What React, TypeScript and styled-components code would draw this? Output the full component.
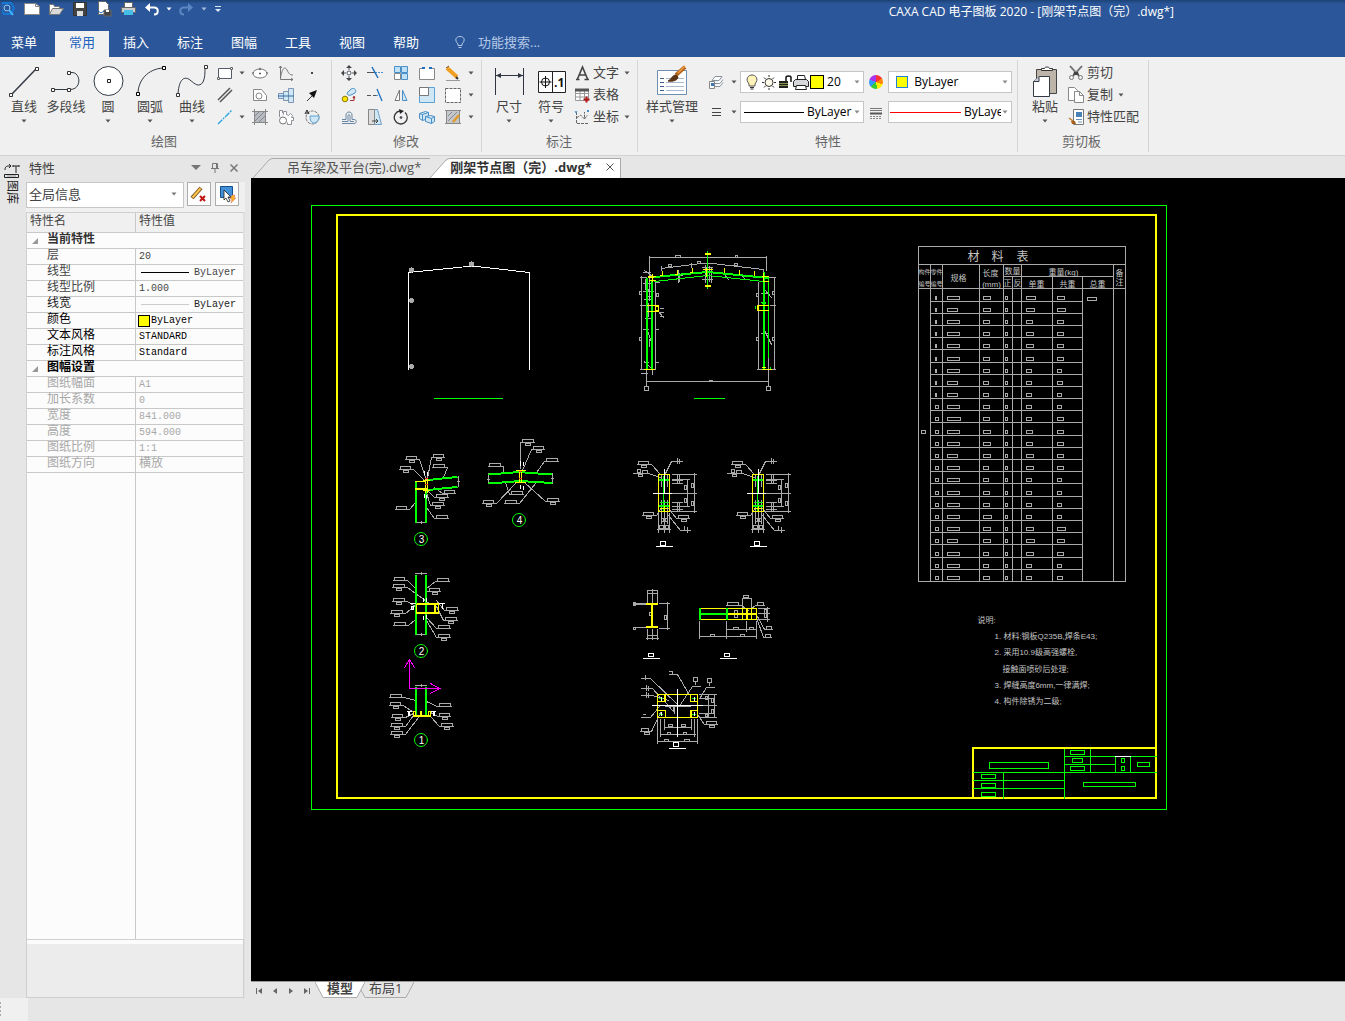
import React from "react";
import styled, { createGlobalStyle } from "styled-components";

const UI = '"Open Sans", "Noto Sans CJK SC", sans-serif';
const GRID = '"Liberation Mono", "Noto Sans CJK SC", monospace';

const GlobalStyle = createGlobalStyle`
  *, *::before, *::after { box-sizing: border-box; }
  body { margin: 0; background: #e6e6e6; }
  button, input, select { font: inherit; color: inherit; border: 0; padding: 0; margin: 0; background: none; outline: none; }
  select { appearance: none; min-width: 0; }
  svg { display: block; flex: none; }
`;

const App = styled.div`
  display: flex;
  flex-direction: column;
  height: 100vh;
  overflow: hidden;
  font-family: ${UI};
  font-size: 13px;
  line-height: 18px;
  color: #444;
`;

/* ---------- Title bar ---------- */

const TitleBar = styled.header`
  display: flex;
  align-items: flex-start;
  justify-content: space-between;
  height: 30px;
  padding-right: 171px;
  background: linear-gradient(#1d4376, #2b579a 4px);
  color: #fff;
`;

const QuickAccess = styled.div`
  display: flex;
  align-items: center;
  padding-top: 1px;
`;

const QuickButton = styled.button<{ $w?: number }>`
  display: flex;
  justify-content: center;
  align-items: center;
  width: ${(p) => p.$w ?? 24}px;
  height: 16px;
`;

const Title = styled.h1`
  margin: 0;
  padding-top: 3px;
  font-size: 12px;
  font-weight: 400;
  line-height: 18px;
  white-space: nowrap;
`;

/* ---------- Ribbon tabs ---------- */

const TabBar = styled.nav`
  display: flex;
  align-items: stretch;
  height: 27px;
  background: #2b579a;
  color: #fff;
`;

const RibbonTab = styled.button<{ $active?: boolean; $menu?: boolean }>`
  width: ${(p) => (p.$menu ? 48 : 54)}px;
  margin-right: ${(p) => (p.$menu ? 7 : 0)}px;
  margin-top: 1px;
  padding-bottom: 4px;
  background: ${(p) => (p.$active ? "#f0f0f0" : "transparent")};
  color: ${(p) => (p.$active ? "#1e63c0" : "#fff")};
`;

const SearchLabel = styled.label`
  display: flex;
  align-items: center;
  gap: 12px;
  margin-left: 21px;
  padding-bottom: 3px;
  color: #b4c8e6;
  input { width: 120px; }
  input::placeholder { color: #b4c8e6; opacity: 1; }
`;

/* ---------- Ribbon ---------- */

const Ribbon = styled.section`
  display: flex;
  height: 99px;
  padding: 3px 0;
  background: #f0f0f0;
  border-bottom: 1px solid #d2d2d2;
`;

const Group = styled.div<{ $left: number; $right: number }>`
  display: flex;
  flex-direction: column;
  padding: 2px ${(p) => p.$right}px 0 ${(p) => p.$left}px;
  border-right: 1px solid #d5d5d5;
`;

const GroupBody = styled.div`
  display: flex;
  height: 70px;
`;

const GroupName = styled.div`
  text-align: center;
  color: #666;
`;

const BigButton = styled.button<{ $w?: number }>`
  display: flex;
  flex-direction: column;
  align-items: center;
  width: ${(p) => p.$w ?? 42}px;
  padding-top: 3px;
  white-space: nowrap;
  > span { margin-bottom: 4px; }
`;

const IconGrid = styled.div<{ $cols: string }>`
  display: grid;
  grid-template-columns: ${(p) => p.$cols};
  grid-auto-rows: 22px;
`;

const IconButton = styled.button`
  display: flex;
  align-items: center;
  justify-content: center;
`;

const ListButton = styled.button`
  display: flex;
  align-items: center;
  gap: 3px;
  height: 22px;
  white-space: nowrap;
  > span { padding-bottom: 2px; }
  > span + svg { margin-left: 2px; }
`;

const List = styled.div`
  display: flex;
  flex-direction: column;
  padding-left: 2px;
`;

const ComboGrid = styled.div`
  display: grid;
  grid-template-columns: 35px 124px 24px 124px;
  grid-template-rows: 22px 22px;
  row-gap: 8px;
  padding-top: 9px;
  padding-left: 5px;
`;

const SplitIcon = styled.button`
  display: flex;
  align-items: center;
  justify-content: space-between;
  padding: 0 3px;
`;

const Combo = styled.label<{ $pad?: number }>`
  display: flex;
  align-items: center;
  gap: 1px;
  padding: 0 3px 0 ${(p) => p.$pad ?? 3}px;
  border: 1px solid #c6c6c6;
  background: #fff;
  color: #000;
  font-size: 12px;
  overflow: hidden;
  select { flex: 1; padding-left: 2px; }
`;

const Swatch = styled.span<{ $size: number; $edge: string }>`
  flex: none;
  width: ${(p) => p.$size}px;
  height: ${(p) => p.$size}px;
  border: 1px solid ${(p) => p.$edge};
  background: #ff0;
`;

const Stroke = styled.span<{ $w: number; $c: string }>`
  flex: none;
  width: ${(p) => p.$w}px;
  height: 1px;
  background: ${(p) => p.$c};
`;

const Wheel = styled.span`
  width: 14px;
  height: 14px;
  border-radius: 50%;
  background: conic-gradient(#f33 0 60deg, #f80 60deg 110deg, #fe0 110deg 170deg, #3c3 170deg 230deg, #39f 230deg 290deg, #a3e 290deg);
`;

/* ---------- Workspace ---------- */

const Workspace = styled.main`
  display: flex;
  flex: 1;
  min-height: 0;
`;

const SideStrip = styled.aside`
  width: 26px;
  padding: 7px 0 0 4px;
`;

const SideTab = styled.button`
  display: flex;
  flex-direction: column;
  align-items: center;
  gap: 1px;
  width: 16px;
  color: #222;
  span { writing-mode: vertical-rl; text-orientation: sideways; font-size: 12px; line-height: 16px; }
`;

const Panel = styled.section`
  display: flex;
  flex-direction: column;
  width: 219px;
  margin-right: 6px;
  background: #f0f0f0;
`;

const PanelHead = styled.div`
  display: flex;
  align-items: center;
  height: 26px;
  padding: 0 2px 3px 3px;
  background: #e6e6e6;
  h2 { flex: 1; margin: 0; font-size: 13px; font-weight: 400; }
`;

const HeadButton = styled.button`
  display: flex;
  justify-content: center;
  width: 19px;
`;

const Selector = styled.div`
  display: flex;
  gap: 3px;
  height: 30px;
`;

const ScopeCombo = styled(Combo)`
  flex: 1;
  height: 26px;
  padding-right: 6px;
  padding-bottom: 2px;
  font-size: 13px;
  color: #444;
  select { padding-left: 0; }
`;

const ToolButton = styled.button`
  display: flex;
  align-items: center;
  justify-content: center;
  width: 24px;
  height: 24px;
  border: 1px solid #adadad;
  background: #fdfdfd;
  & + & { margin: 0 6px 0 1px; }
`;

const Sheet = styled.div`
  display: flex;
  flex-direction: column;
  flex: 1;
  min-height: 0;
  border: 1px solid #d0d0d0;
  border-right: 2px solid #e0e0e0;
  background: #fcfcfc;
`;

const Props = styled.table`
  width: 100%;
  border-collapse: separate;
  border-spacing: 0;
  table-layout: fixed;
  font-family: ${GRID};
  font-size: 12px;
  line-height: 15px;
  col:first-child { width: 109px; }
  th, td { padding: 0; height: 16px; border-bottom: 1px solid #c8c8c8; text-align: left; font-weight: 400; white-space: nowrap; }
  thead th { height: 20px; padding-left: 3px; background: #f0f0f0; }
  tr > :first-child:not([colspan]) { border-right: 1px solid #c8c8c8; }
`;

const Row = styled.tr<{ $tone: string }>`
  color: ${(p) => p.$tone};
  th:not([colspan]) { padding-left: 20px; }
`;

const SectionToggle = styled.button`
  display: flex;
  align-items: center;
  gap: 9px;
  height: 15px;
  padding-left: 5px;
  font-weight: 700;
`;

const Value = styled.div<{ $latin?: boolean; $pad?: number; $gap?: number }>`
  display: flex;
  align-items: center;
  gap: ${(p) => p.$gap ?? 5}px;
  height: 15px;
  padding-left: ${(p) => p.$pad ?? 3}px;
  font-size: ${(p) => (p.$latin ? 10 : 12)}px;
`;

const Blank = styled.div`
  flex: 1;
  width: 109px;
  border-right: 1px solid #c8c8c8;
`;

const Hint = styled.div`
  height: 57px;
  border-top: 4px solid #fcfcfc;
  outline: 1px solid #cfcfcf;
  background: #ececec;
`;

/* ---------- Documents ---------- */

const Documents = styled.section`
  display: flex;
  flex-direction: column;
  flex: 1;
  min-width: 0;
`;

const DocTabs = styled.div`
  display: flex;
  align-items: flex-end;
  height: 22px;
  padding-left: 2px;
`;

const DocTab = styled.div<{ $active?: boolean }>`
  display: flex;
  height: 20px;
  font-weight: ${(p) => (p.$active ? 700 : 400)};
  color: ${(p) => (p.$active ? "#333" : "#555")};
`;

const DocTabBody = styled.div<{ $active?: boolean }>`
  display: flex;
  align-items: center;
  gap: 14px;
  padding: 0 ${(p) => (p.$active ? 6 : 9)}px 3px ${(p) => (p.$active ? 0 : 14)}px;
  border-top: 1px solid #aaa;
  border-right: ${(p) => (p.$active ? 1 : 0)}px solid #aaa;
  background: ${(p) => (p.$active ? "#fff" : "#e6e6e6")};
  white-space: nowrap;
`;

const Canvas = styled.div`
  flex: 1;
  min-height: 0;
  overflow: hidden;
  background: #000;
`;

const SheetTabs = styled.div`
  display: flex;
  height: 17px;
  border-top: 1px solid #999;
`;

const SheetNav = styled.div`
  display: flex;
  align-items: center;
  padding-top: 1px;
  width: 64px;
`;

const NavButton = styled.button`
  display: flex;
  justify-content: center;
  width: 16px;
`;

const SheetTab = styled.button<{ $active?: boolean }>`
  display: flex;
  height: 16px;
  padding: 0 4px;
  line-height: 12px;
  border-bottom: 1px solid #aaa;
  background: ${(p) => (p.$active ? "#fff" : "transparent")};
  font-weight: ${(p) => (p.$active ? 700 : 400)};
`;

const StatusBar = styled.footer`
  height: 23px;
  background: #e6e6e6;
`;

const Grip = styled.div`
  width: 28px;
  height: 23px;
  padding-top: 4px;
  background: #f0f0f0;
`;

/* ---------- Icons ---------- */

type IconProps = { children: React.ReactNode; s?: number; w?: number; c?: string };
const Icon = ({ children, s = 16, w, c = "#555b66" }: IconProps) => (
  <svg width={w ?? s} height={s} viewBox={`0 0 ${w ?? s} ${s}`} fill="none" stroke={c} aria-hidden="true">
    {children}
  </svg>
);

const Arrow = ({ c = "#555" }: { c?: string }) => (
  <svg width="6" height="4" viewBox="0 0 6 4" aria-hidden="true">
    <path d="M.5 .5h5L3 3.5z" fill={c} />
  </svg>
);

const Big: Record<string, React.ReactNode> = {
  line: <><path d="M4 29L28 4" strokeWidth="1.500" /><path d="M1.500 28.500h3v3h-3zM27.500 2.500h3v3h-3z" fill="#fff" stroke="#333" /></>,
  poly: <><path d="M3 24.500h16M18 7.500h4c9 0 10 17-2 17" /><path d="M1.500 23.500h3v3h-3zM17.500 23.500h3v3h-3zM17.500 6.500h3v3h-3z" fill="#fff" stroke="#333" /></>,
  circle: <><circle cx="16.500" cy="16" r="14.500" fill="#fff" /><path d="M15.500 14.500h3v3h-3z" stroke="#222" /></>,
  arc: <><path d="M4 29C4 15 14 4 29 3" /><path d="M2.500 27.500h3v3h-3zM28.500 1.500h3v3h-3z" fill="#fff" stroke="#000" /></>,
  curve: <><path d="M2 29C3 13 9 11 14 15s9 8 13 2c2-4 2-9 2-14" /><path d="M.5 28.500h3v3h-3zM28.500.5h3v3h-3z" fill="#fff" stroke="#333" /></>,
  dim: <><path d="M2.500 3v27M30.500 3v27M3 10.500h27" stroke="#2f3440" /><path d="M3 10.500l5-2.500v5zM30 10.500l-5-2.500v5z" fill="#2f3440" stroke="none" /></>,
  symbol: <><path d="M3.500 6.500h27v21h-27zM17.500 6.500v21" fill="#fff" stroke="#222" /><circle cx="10.500" cy="17" r="4" stroke="#111" /><path d="M4.500 17h12M10.500 11v12" stroke="#111" /><text x="19" y="22" fontSize="12" fontWeight="700" fontFamily="Open Sans" fill="#111" stroke="none">.1</text></>,
  style: <><path d="M1.500 5.500h29v24h-29z" fill="#fff" stroke="#6f8fae" /><path d="M4 13.500h4M4 17.500h4M4 21.500h4M4 25.500h4" stroke="#3f5f86" /><path d="M10 13.500h18M10 17.500h18M10 21.500h18M10 25.500h18" stroke="#a9b8cf" /><path d="M29 2l-9 8" stroke="#b4651d" strokeWidth="4" /><path d="M29 1l-7 7" stroke="#f0a040" strokeWidth="1.500" /><path d="M12 16c3-1 4-6 8-6l2 2c0 3-5 5-10 4z" fill="#5b3413" stroke="#5b3413" /></>,
  paste: <><path d="M7.500 4.500h20v24h-20z" fill="#bdb5aa" stroke="#444" /><path d="M12.500 5.500v-2h3c0-2 5-2 5 0h3v2z" fill="#fff" stroke="#333" /><path d="M4.500 16.500l6-5h10v20h-16z" fill="#fff" stroke="#333a44" /><path d="M4.500 16.500h5.500v-5" fill="#c9ccd6" /></>,
};

const B = "#4b8fc8";
const LB = "#cfe6f5";
const S: Record<string, React.ReactNode> = {
  rect: <><path d="M1.500 3.500h13v10h-13z" fill="#fff" /><path d="M.5 12.500h2v2h-2zM13.500 2.500h2v2h-2z" fill="#fff" stroke="#666" /></>,
  ellipse: <><ellipse cx="8" cy="8.500" rx="7" ry="4.500" fill="#fff" stroke="#777" /><circle cx="8" cy="4" r="1.200" fill="#777" stroke="none" /><path d="M8 7.500v2M7 8.500h2M0 8h2M14 8h2" /></>,
  func: <path d="M2.500 1v13.500H15M2.500 13C4 3 7 1 9 5s3 5 6 5M1 3l1.500-2L4 3M13 13l2 1.500L13 16" stroke="#777" />,
  dot: <rect x="7" y="7" width="2" height="2" fill="#444" stroke="none" />,
  parallel: <path d="M1 13L13 1M3 15L15 3" stroke="#555" strokeWidth="1.500" />,
  contour: <><path d="M1.500 2.500h8l5 6v5h-13z" fill="#fff" stroke="#888" /><circle cx="7" cy="9" r="3" stroke="#888" /></>,
  shaft: <><path d="M.5 6.500h5v5h-5zM5.500 4.500h5v9h-5zM10.500 1.500h5v14h-5z" fill={LB} stroke="#7b95b2" /><path d="M0 9h16" stroke="#2e6da4" /></>,
  arrow: <><path d="M3 14l6-6" stroke="#333" /><path d="M13 3l-3 8-5-5z" fill="#111" stroke="none" /></>,
  axis: <path d="M1 15L15 1" stroke="#27a3e0" strokeWidth="1.300" strokeDasharray="6 1 2 1" />,
  hatch: <><path d="M2.500 2.500h11v11h-11z" fill="#b8bcc2" /><path d="M0 2.500h16M0 13.500h16M2.500 0v16M13.500 0v16M3 7l4-4M3 12l9-9M7 13l6-6" stroke="#888" /></>,
  gear: <><path d="M5.500 5.500V2.500h3v3l2 1 2-2 2 2-1 2h2v3h-2v4h-4v-2" fill="#fff" stroke="#8a8f98" /><path d="M1.500 8V1.500h3V4" fill="#fff" stroke="#8a8f98" /><circle cx="5" cy="11.500" r="3.500" fill="#fff" stroke="#777" /></>,
  section: <><circle cx="8.500" cy="8.500" r="6.500" strokeDasharray="3 1" stroke="#777" /><path d="M6 7h9c0 4-2 7-5 7s-4-3-4-7z" fill={LB} stroke="#5aa2d6" /><path d="M1 5l2-4 2 4M2 4h3" stroke="#222" /></>,
  move: <><circle cx="8" cy="8" r="2" fill="#fff" /><path d="M8 0l3 3H5zM8 16l3-3H5zM0 8l3-3v6zM16 8l-3-3v6z" fill="#444" stroke="none" /><path d="M8 3v2M8 11v2M3 8h2M11 8h2" /></>,
  trim: <><path d="M0 7.500h8" stroke="#555" /><path d="M8 7.500h8" stroke={B} strokeDasharray="2 1" /><path d="M5 2l6 11" stroke="#1f6fc0" strokeWidth="1.500" /></>,
  array: <><path d="M1.500 1.500h6v6h-6zM8.500 1.500h6v6h-6zM8.500 8.500h6v6h-6z" fill="#bfe0f5" stroke={B} /><path d="M1.500 8.500h6v6h-6z" fill="#fff" stroke="#888" /></>,
  open: <><path d="M5 3.500H.5v11h15v-11H12" fill="#fff" stroke="#888" /><path d="M3 3h3M10 3h3" stroke="#1f6fc0" strokeWidth="2" /></>,
  erase: <><path d="M2 3l10 9" stroke="#f0a020" strokeWidth="4" /><path d="M1 3l3-2" stroke="#7a4a12" /><path d="M11 12l2 2" stroke="#333" strokeWidth="2" /><path d="M1 15.500h14" stroke="#999" /></>,
  copy: <><circle cx="4" cy="12" r="2.800" fill="#ffe600" stroke="#8a7a10" /><path d="M6 6l4-4c4-2 6 2 4 4l-4 2c-3 1-4-1-4-2z" fill={LB} stroke={B} /><path d="M9 13.500h4V10M13 9l-1 2h2z" stroke="#a33" /></>,
  extend: <><path d="M0 8.500h4M6 8.500h3" stroke="#555" /><path d="M9 8.500h4" stroke={B} strokeDasharray="2 1" /><path d="M10 2l5 12" stroke="#1f6fc0" strokeWidth="1.300" /></>,
  mirror: <><path d="M6.500 3v10.500H2z" fill="#fff" stroke="#777" /><path d="M9.500 3v10.500h4.500z" fill={LB} stroke={B} /></>,
  scale: <><path d="M.5.5h15v15H.5z" fill={LB} stroke="#5aa2d6" /><path d="M.5.5h9v8h-9z" fill="#fff" stroke="#777" /></>,
  select: <path d="M.5 1.500h15v14H.5z" fill="#fff" stroke="#666" strokeDasharray="3 1" />,
  offset: <path d="M1 14.500h12c3 0 3-4 0-4h-2V6c0-4-6-4-6 0v4.500H1M1 12.500h6V7c0-2 2-2 2 0v5.500h4" stroke="#6a86a6" />,
  stretch: <><path d="M1.500.5h9l4 15h-13z" fill={LB} stroke="#6f9fc8" /><path d="M1.500.5h6v15h-6z" fill="#ddd" stroke="#888" /><path d="M5 12h6M9 10l2 2-2 2" stroke="#444" /></>,
  rotate: <><path d="M12 3.500A6.500 6.500 0 1 1 7 2" stroke="#333" strokeWidth="1.300" /><path d="M6 0l5 2-4 3z" fill="#222" stroke="none" /><circle cx="8" cy="8.500" r="1" fill="#333" /></>,
  block: <><path d="M.5 4.500l6-2 3 1v6l-6 2-3-2z" fill={LB} stroke={B} /><path d="M.5 4.500l3 1 6-2M3.500 5.500v6" stroke={B} /><path d="M6.500 7.500l5-1 4 1v5l-3 2-6-2z" fill={LB} stroke={B} /><path d="M6.500 7.500l6 2 3-2M12.500 9.500v5" stroke={B} /></>,
  fillEdit: <><path d="M1.500 1.500h13v13h-13z" fill="#c4c7cc" stroke="#888" /><path d="M0 1.500h16M0 14.500h16M3 7l4-4M3 12l9-9" stroke="#888" /><path d="M8 13l6-7" stroke="#e09a2a" strokeWidth="2.500" /></>,
  text: <path d="M2 14.500h3.500M10.500 14.500H15M3.500 14L8.500 2l5 12M5.500 10h6" stroke="#444" strokeWidth="1.600" />,
  table: <><path d="M1.500 2.500h13v11h-13zM1.500 6.500h13M1.500 10h13M6 3v10M10.500 3v10" fill="#fff" stroke="#999" /><path d="M1 3h14" stroke="#555" strokeWidth="3" /><path d="M12.500 9.500v6M9.500 12.500h6" stroke="#b01818" strokeWidth="2" /></>,
  coord: <><path d="M2.500 3v11.500H15M2.500 9l4-3 4 4V3M10.500 10l3-4" stroke="#666" strokeDasharray="3 1" /><path d="M1 2l1 2 1-2M13 1l2 2M15 1l-2 2" stroke={B} /></>,
  layers: <><path d="M4 6.500l3-4h7l-3 4zM6 9.500h6l3-4M6 12.500h6l3-4" fill="#fff" stroke="#8a93a0" /><path d="M1.500 7.500h5v7h-5z" fill="#fff" stroke="#888" /><path d="M3 9h3v3H3z" fill="#3a75b5" stroke="none" /></>,
  lines: <path d="M4 4.500h9M4 8.500h9M4 11.500h9" stroke="#444" />,
  weights: <><path d="M2 4.500h12M2 6.500h12" stroke="#777" /><path d="M2 9.500h12" stroke="#555" strokeWidth="2" /><path d="M2 12.500h12M2 14.500h12" stroke="#888" strokeDasharray="2 1" /></>,
  bulb: <><path d="M5 10C1 5 4 1 8 1s7 4 3 9v2H5z" fill="#fff3b8" stroke="#555" /><path d="M6 13.500h4M6.500 15h3" stroke="#333" /></>,
  sun: <><circle cx="8" cy="8.500" r="4" fill="#fffbe8" stroke="#333" /><path d="M8 1v2M8 14v2M1 8.500h2M13 8.500h2M3 3.500l1.500 1.500M13 3.500L11.500 5M3 13.500L4.500 12M13 13.500L11.500 12" stroke="#333" /></>,
  lock: <><path d="M1 7h9v7H1z" fill="#222" stroke="none" /><path d="M1 9.500h9M1 11.500h9" stroke="#cfe06a" strokeWidth=".6" /><path d="M8 7V3.500C8 1.500 13 1.500 13 3.500V8" stroke="#111" strokeWidth="1.500" /></>,
  plot: <><path d="M4.500 5.500v-4h7l1 4" fill="#fff" stroke="#222" /><path d="M2.500 5.500h11l2 2v5h-15v-5z" fill="#d4d6da" stroke="#222" /><path d="M3.500 11.500h9l1 4h-11z" fill="#fff" stroke="#222" /></>,
  cut: <><path d="M2 1l9 10M14 1L5 11" stroke="#999" strokeWidth="2" /><path d="M2 1l9 10M14 1L5 11" stroke="#444" strokeWidth=".7" /><path d="M6 7h4l1 3H5z" fill="#444" stroke="none" /><circle cx="3.500" cy="12.500" r="2" stroke="#777" /><circle cx="12.500" cy="12.500" r="2" stroke="#777" /></>,
  dup: <><path d="M.5.5h6l3 3v10h-9z" fill="#fff" stroke="#888" /><path d="M6.500 4.500h5l4 4v7h-9z" fill="#fff" stroke="#888" /><path d="M11.500 4.500v4h4" stroke="#888" /></>,
  match: <><path d="M5.500.5h10v15h-10z" fill="#fff" stroke="#777" /><path d="M8 3h6v5H8z" fill="#4a82b8" stroke="none" /><path d="M8 10.500h6M10 13h4" stroke="#6a8fb8" /><path d="M1 9l4 3" stroke="#c87a2a" strokeWidth="1.500" /><path d="M3 12h4l1 3H4z" fill="#a9601c" stroke="none" /></>,
};

const Small = ({ n }: { n: string }) => <Icon>{S[n]}</Icon>;

/* ---------- CAD drawing ---------- */

const hl = (x1: number, x2: number, y: number) => `M${x1} ${y}H${x2}`;
const vl = (x: number, y1: number, y2: number) => `M${x} ${y1}V${y2}`;
const bx = (x: number, y: number, w: number, h: number) => `M${x} ${y}h${w}v${h}h${-w}z`;

type Tag = [x: number, y: number, w: number, sub: 0 | 1, side: "L" | "R", tx: number, ty: number];
const tagPath = ([x, y, w, sub, side, tx, ty]: Tag) => {
  const a = side === "L" ? x - 2 : x - 1;
  const b = side === "L" ? x + w + 1 : x + w + 3;
  const from = side === "L" ? a : b;
  return bx(x, y, w, 3) + hl(a, b, y + 3) + (sub ? bx(x + 3, y + 4, 5, 2) : "") + `M${from} ${y + 3}L${tx} ${ty}`;
};

const TAGS: Tag[] = [
  [406, 456, 10, 1, "R", 426, 480], [400, 466, 10, 1, "R", 424, 480], [433, 454, 10, 1, "L", 427, 478],
  [433, 464, 11, 0, "R", 443, 477], [444, 490, 10, 0, "L", 434, 487], [436, 494, 11, 1, "L", 427, 490],
  [432, 502, 11, 1, "L", 426, 492], [436, 515, 11, 0, "L", 426, 507], [396, 506, 10, 0, "R", 415, 502],
  [522, 439, 11, 1, "L", 520, 468], [533, 446, 10, 1, "L", 522, 470], [546, 458, 11, 0, "L", 536, 472],
  [489, 463, 11, 0, "R", 503, 471], [511, 491, 11, 0, "L", 505, 482], [483, 500, 10, 1, "R", 516, 482],
  [505, 500, 11, 0, "R", 535, 483], [547, 498, 11, 1, "L", 524, 482],
  [394, 577, 10, 0, "R", 415, 588], [393, 584, 11, 1, "R", 430, 604], [393, 598, 11, 1, "R", 415, 606],
  [391, 610, 11, 1, "R", 415, 605], [394, 622, 11, 0, "R", 415, 619], [437, 578, 11, 0, "L", 426, 588],
  [429, 588, 10, 1, "L", 426, 590], [446, 607, 11, 1, "L", 436, 600], [445, 617, 11, 1, "L", 436, 606],
  [438, 625, 11, 0, "L", 426, 617], [438, 634, 11, 1, "L", 426, 620],
  [390, 694, 11, 0, "R", 415, 700], [390, 702, 10, 1, "R", 413, 712], [392, 714, 10, 1, "R", 413, 713],
  [391, 723, 11, 1, "R", 413, 715], [391, 731, 11, 1, "R", 418, 717], [439, 703, 11, 0, "L", 426, 701],
  [439, 713, 10, 1, "L", 430, 712], [441, 723, 11, 1, "L", 430, 716],
  [727, 602, 11, 0, "R", 748, 610], [757, 602, 6, 0, "L", 751, 608], [766, 626, 5, 0, "L", 757, 616],
  [765, 634, 5, 0, "L", 756, 617], [706, 721, 10, 1, "L", 697, 714], [641, 728, 7, 1, "R", 660, 712],
];

const NODES: [number, number, string][] = [[421, 539, "3"], [519, 520, "4"], [421, 651, "2"], [421, 740, "1"]];

const Elevation = () => (
  <>
    <path stroke="#fff" d="M408 369V272L467 266H476L529 272V369" />
    <g fill="#aaa" stroke="none">
      <circle cx="411" cy="269.500" r="2.600" /><circle cx="411" cy="300" r="2.600" />
      <circle cx="411" cy="366" r="2.600" /><circle cx="471" cy="263.500" r="2.600" />
    </g>
    <path stroke="#0f0" d={hl(434, 502, 398) + hl(694, 724, 398)} />
  </>
);

const Frame = () => (
  <>
    <path
      stroke="#aaa"
      d={
        hl(649, 766, 257) + vl(649, 256, 272) + vl(766, 256, 270) + bx(675, 255, 5, 2) + bx(735, 255, 2, 2) +
        "M661 268L700 263H712L763 269V276M661 266V270M691 263V267" + bx(668, 264, 3, 2) + bx(697, 261, 3, 2) + bx(734, 263, 3, 2) +
        vl(641, 276, 369) + vl(655, 282, 369) + vl(758, 282, 369) + vl(774, 277, 369) +
        hl(640, 646, 277) + hl(640, 646, 305) + hl(640, 655, 369) + hl(655, 659, 282) + hl(768, 775, 277) + hl(770, 775, 305) + hl(757, 775, 369) +
        bx(639, 291, 2, 3) + bx(639, 337, 2, 3) + bx(656, 293, 2, 3) + bx(756, 293, 2, 3) + bx(756, 337, 2, 3) + bx(772, 291, 2, 3) + bx(772, 337, 2, 3) +
        vl(649, 270, 300) + "M644 270L652 276M643 272H650M646 286L649 292M646 296H652M646 328L652 344M643 329H648M649 339V346M644 361L650 367M641 373H647M652 370V374M644 362H648" +
        "M643 291H653M644 299H650M648 303V316M645 318H650M643 283H651M645 279V289" +
        hl(660, 663, 308) + hl(660, 663, 312) + hl(660, 663, 316) + "M657 310L663 317M764 289L771 297M764 330L771 344M655 329H658M655 362H658" +
        "M678 270V282M676 275H682M679 273V281M702 267H712M700 272H714M702 279H712M705 265V282M711 267V282M709 266V281M724 274L728 279M740 274L745 279M761 293H768M761 333H768" +
        hl(647, 768, 381) + hl(709, 712, 380) + vl(646, 357, 385) + vl(768, 357, 385)
      }
    />
    <g stroke="#aaa"><circle cx="646" cy="388" r="2.300" /><circle cx="768" cy="388" r="2.300" /></g>
    <path stroke="#0f0" strokeWidth="2" d="M646.500 278V368M651.500 281V368M763.500 272V368" />
    <path stroke="#0f0" d="M768 277V357M654 276L707 271L767 277M654 281L707 275L763 281M707 251V288M654 277L707 272L767 278M755 306V308M761 302H765M762 303H765M770 367V369" />
    <path
      stroke="#ff0"
      d={
        hl(705, 710, 253) + hl(705, 710, 254) + hl(705, 710, 285) + hl(705, 710, 286) +
        "M662 271V275H660M677 270V274H675M692 268V272H690M724 268V272M739 270V274M754 271V275M703 269H712M706 268V276" +
        hl(648, 655, 276) + hl(648, 653, 277) + hl(649, 655, 280) + vl(652, 274, 281) + hl(762, 768, 276) + hl(763, 768, 281) + vl(763, 273, 281) +
        bx(655, 306, 3, 4) + hl(647, 658, 305) + hl(647, 658, 311) + hl(757, 768, 305) + hl(757, 768, 310) + vl(757, 305, 310) + vl(758, 305, 310) +
        hl(644, 654, 369) + hl(762, 771, 369) + hl(762, 765, 367)
      }
    />
  </>
);

const Joints = () => (
  <>
    <path stroke="#aaa" d={TAGS.map(tagPath).join("")} />
    <path
      stroke="#aaa"
      d={hl(415, 426, 522) + vl(421, 521, 523) + hl(415, 426, 573) + vl(421, 572, 574) + hl(415, 426, 634) + vl(421, 633, 635) +
        hl(415, 426, 685) + vl(421, 684, 686) + vl(458, 476, 486) + hl(457, 459, 481) + vl(488, 473, 483) + hl(487, 489, 479) + vl(552, 473, 483) + hl(551, 553, 478)}
    />
    <path
      stroke="#0f0" strokeWidth="2"
      d="M415.500 482V521M425.500 490V521M428 479.500L456 476.500M428 489.500L456 486.500M489 474L518 471.500L551 474M489 483L520 480.500L551 482.500M415.500 575V633M425.500 575V633M415.500 687V714M425.500 687V714"
    />
    <path
      stroke="#ff0"
      d={hl(415, 425, 481) + hl(415, 426, 488) + hl(415, 426, 489) + vl(425, 479, 492) + vl(427, 479, 492) + hl(423, 429, 480) + hl(423, 429, 490) +
        vl(519, 470, 482) + vl(521, 470, 482) + hl(516, 525, 470) + hl(515, 525, 482) +
        bx(416, 604, 22, 9) + hl(417, 438, 603) + hl(417, 438, 612) + vl(434, 603, 613) + vl(435, 603, 613) +
        hl(414, 430, 716) + hl(414, 430, 715) + bx(413, 711, 2, 5) + bx(428, 711, 2, 5) + vl(420, 711, 715) + vl(421, 711, 715)}
    />
    <path stroke="#f22" d={hl(425, 427, 478) + hl(425, 427, 484) + hl(519, 521, 471) + hl(519, 521, 478)} />
    <path
      stroke="#fff"
      d={vl(424, 471, 474) + vl(427, 472, 475) + vl(424, 494, 497) + vl(426, 495, 498) + vl(520, 461, 465) + vl(523, 462, 465) + vl(520, 485, 488) + vl(523, 486, 489) +
        vl(423, 598, 601) + vl(426, 598, 601) + vl(423, 616, 619) + vl(426, 615, 618) + hl(410, 415, 603) + bx(411, 606, 2, 3) + hl(439, 444, 603) + vl(442, 604, 608) +
        hl(407, 411, 711) + vl(409, 711, 715) + vl(408, 711, 715) + hl(431, 435, 711) + vl(433, 711, 715) + vl(434, 711, 715)}
    />
    <path stroke="#f0f" d="M409 660V688H439M404 667L409 659L414 667M430 683L439 688L430 693" />
    {NODES.map(([x, y, n]) => (
      <g key={n} shapeRendering="auto">
        <circle cx={x - 0.5} cy={y - 0.5} r="6.500" stroke="#0f0" />
        <text x={x} y={y + 3} fill="#fff" stroke="none" fontSize="10" textAnchor="middle">{n}</text>
      </g>
    ))}
  </>
);

const EndPlate = ({ dx }: { dx: number }) => (
  <g transform={`translate(${dx} 0)`}>
    <path
      stroke="#aaa"
      d={
        tagPath([638, 461, 10, 1, "R", 660, 474]) + tagPath([643, 512, 10, 1, "R", 660, 509]) + tagPath([678, 515, 10, 1, "L", 668, 508]) +
        hl(633, 648, 473) + bx(637, 469, 3, 3) + bx(642, 470, 5, 3) + bx(638, 474, 4, 2) + "M648 473L660 477M664 475L671 461H682M677 458V463M679 459V463" +
        "M668 515L680 530H690M684 526V530M687 527V532" +
        hl(672, 696, 474) + hl(672, 696, 493) + hl(672, 696, 511) + vl(687, 479, 506) + vl(694, 473, 512) +
        hl(672, 689, 479) + hl(672, 682, 480) + hl(672, 682, 483) + hl(672, 682, 502) + hl(672, 689, 506) + hl(672, 682, 509) +
        bx(677, 474, 2, 9) + bx(677, 502, 2, 9) + bx(684, 485, 2, 4) + bx(691, 483, 2, 4) + bx(684, 498, 2, 4) + bx(691, 501, 2, 4) +
        vl(658, 513, 532) + vl(664, 500, 532) + vl(669, 513, 532) + vl(661, 500, 523) + vl(667, 500, 523) + hl(658, 669, 525) + hl(657, 670, 529) +
        bx(659, 525, 4, 3) + bx(665, 525, 3, 3) + bx(661, 518, 2, 3) + bx(665, 518, 2, 3) + vl(661, 475, 486) + vl(667, 475, 486)
      }
    />
    <path stroke="#0f0" d={vl(663, 476, 510) + hl(659, 669, 480) + hl(659, 669, 479) + hl(659, 669, 505) + hl(659, 669, 506) + hl(660, 668, 502)} />
    <path stroke="#ff0" d={bx(658, 474, 11, 37) + vl(664, 506, 511) + hl(660, 667, 508)} />
    <path stroke="#fff" d={hl(653, 671, 493) + vl(664, 469, 492) + bx(660, 541, 5, 4) + hl(656, 672, 546)} />
  </g>
);

const Sections = () => (
  <>
    <EndPlate dx={0} />
    <EndPlate dx={94} />
    <path
      stroke="#aaa"
      d={
        bx(647, 590, 10, 3) + vl(647, 590, 602) + vl(652, 589, 602) + vl(657, 590, 602) +
        vl(647, 629, 639) + vl(652, 629, 639) + vl(657, 629, 639) + bx(647, 635, 10, 3) + hl(646, 658, 638) +
        hl(659, 669, 603) + hl(659, 669, 628) + vl(667, 602, 629) + bx(664, 615, 2, 4) + hl(634, 645, 604) + hl(634, 645, 603) + hl(634, 645, 627) + bx(633, 602, 2, 3) + bx(633, 627, 2, 2) + bx(649, 612, 3, 3) +
        vl(699, 621, 638) + vl(726, 621, 638) + vl(756, 621, 638) + hl(726, 756, 629) + hl(699, 756, 636) + vl(746, 621, 631) +
        bx(733, 627, 5, 2) + bx(749, 627, 4, 2) + bx(710, 634, 4, 2) + bx(740, 634, 4, 2) + bx(743, 595, 5, 2) + hl(742, 751, 598) + vl(742, 598, 608) + vl(751, 598, 608) +
        vl(767, 607, 621) + hl(758, 769, 608) + hl(758, 769, 613) + hl(758, 769, 619) + bx(764, 609, 2, 8) + bx(734, 610, 3, 7) +
        "M641 678H650L677 704M645 675V679M669 674H677L688 693M669 671H672V674M641 688H652L660 697M646 685V690M648 686V690M641 695H652L668 700M646 692V697M648 693V697" +
        "M641 717H650L659 706M643 714H645M680 704L692 686H700M700 697L706 687H714M693 677H697V681H693ZM695 681V684M707 678H711V682H707ZM709 682V685" +
        vl(657, 719, 743) + vl(697, 719, 743) + vl(660, 719, 736) + vl(694, 719, 736) + vl(664, 719, 729) + vl(691, 719, 729) +
        hl(664, 691, 727) + hl(660, 695, 734) + hl(657, 697, 741) + bx(668, 724, 4, 2) + bx(681, 724, 4, 2) + bx(667, 732, 3, 2) + bx(683, 732, 3, 2) + bx(664, 739, 4, 2) + bx(684, 739, 5, 2) +
        hl(699, 716, 694) + hl(699, 716, 705) + hl(699, 716, 717) + vl(708, 694, 717) + vl(714, 694, 717) + hl(699, 710, 698) + hl(699, 710, 713) +
        bx(711, 698, 2, 4) + bx(711, 709, 2, 4) + bx(705, 696, 2, 3) + bx(705, 714, 2, 2) + "M665 702L673 711V707M674 706V713" + hl(665, 690, 706)
      }
    />
    <path
      stroke="#ff0"
      d={hl(646, 657, 603) + hl(646, 657, 604) + hl(646, 657, 626) + hl(646, 657, 627) + vl(651, 604, 627) + vl(652, 604, 627) +
        bx(700, 608, 56, 11) + hl(727, 756, 614) + hl(727, 756, 613) + vl(742, 608, 619) + vl(746, 608, 619) + vl(747, 608, 619) + vl(751, 608, 619) +
        bx(657, 694, 40, 23) + vl(665, 694, 701) + vl(665, 710, 717) + hl(657, 665, 701) + hl(657, 665, 710) +
        vl(690, 694, 701) + vl(690, 710, 717) + hl(690, 697, 701) + hl(690, 697, 710) + vl(664, 694, 701) + vl(691, 710, 717)}
    />
    <path stroke="#0f0" d={bx(699, 608, 1, 11) + bx(726, 608, 1, 11) + hl(700, 726, 613) + hl(700, 726, 614) + hl(659, 662, 698) + hl(659, 662, 714) + hl(692, 695, 698) + hl(692, 695, 714)} />
    <path
      stroke="#fff"
      d={bx(648, 653, 5, 3) + hl(643, 659, 658) + bx(724, 653, 5, 3) + hl(720, 736, 658) + bx(673, 742, 5, 4) + hl(669, 685, 748) +
        hl(652, 702, 705) + vl(677, 689, 736) + vl(661, 697, 700) + vl(661, 712, 715) + vl(694, 697, 700) + vl(694, 712, 715)}
    />
  </>
);

const RULES = [301, 313, 325, 337, 349, 362, 374, 386, 398, 410, 422, 435, 447, 459, 471, 483, 496, 508, 520, 532, 544, 557, 569, 581];
const CELLS: [number, number[]][] = [
  [947, [12, 10, 12, 12, 12, 12, 12, 10, 10, 12, 13, 12, 12, 10, 12, 12, 12, 12, 12, 12, 10, 12, 12, 12]],
  [983, [7, 7, 6, 6, 6, 6, 6, 5, 5, 6, 6, 7, 7, 7, 5, 5, 6, 6, 8, 7, 7, 5, 5, 6]],
  [1026, [9, 8, 6, 7, 7, 7, 5, 5, 5, 5, 5, 6, 6, 7, 7, 5, 5, 5, 5, 7, 8, 7, 5, 5]],
  [1057, [7, 8, 6, 6, 6, 6, 4, 5, 4, 4, 6, 6, 6, 6, 6, 4, 4, 4, 4, 8, 7, 6, 4, 5]],
];

const HEADINGS: [number, number, string, number][] = [
  [973, 260, "材", 12], [997, 260, "料", 12], [1022, 260, "表", 12],
  [924, 273, "构件", 6], [924, 285, "编号", 6], [936, 273, "零件", 6], [936, 285, "编号", 6],
  [958, 280, "规格", 8], [990, 275, "长度", 8], [991, 286, "(mm)", 8], [1012, 273, "数量", 8],
  [1007, 285, "正", 8], [1017, 285, "反", 8], [1063, 274, "重量(kg)", 8],
  [1036, 286, "单重", 8], [1067, 286, "共重", 8], [1097, 286, "总重", 8], [1119, 275, "备", 8], [1119, 284, "注", 8],
];

const Materials = () => (
  <>
    <path
      stroke="#aaa"
      d={
        bx(918, 246, 207, 335) + hl(918, 1125, 264) + hl(1003, 1113, 276) + hl(918, 1125, 288) +
        [930, 942, 979, 1003, 1021, 1113].map((x) => vl(x, 264, 581)).join("") +
        [1012, 1052, 1082].map((x) => vl(x, 276, 581)).join("") +
        RULES.slice(0, -1).map((y) => hl(930, 1082, y)).join("") +
        CELLS.map(([x, ws]) => ws.map((w, i) => bx(x, RULES[i] - 5, w, 3)).join("")).join("") +
        RULES.map((y, i) => bx(935, y - 5, i < 9 ? 1 : 3, 3) + bx(1005, y - 5, 2, 3)).join("") +
        bx(921, 430, 4, 3) + bx(1087, 297, 9, 3)
      }
    />
    <g fill="#c4c4c4" stroke="none" textAnchor="middle">
      {HEADINGS.map(([x, y, t, s], i) => <text key={i} x={x} y={y} fontSize={s}>{t}</text>)}
    </g>
  </>
);

const NOTES: [number, number, string][] = [
  [977, 622, "说明:"],
  [994, 638, "1. 材料:钢板Q235B,焊条E43;"],
  [994, 654, "2. 采用10.9级高强螺栓,"],
  [1002, 671, "接触面喷砂后处理;"],
  [994, 687, "3. 焊缝高度6mm,一律满焊;"],
  [994, 703, "4. 构件除锈为二级;"],
];

const TitleBlock = () => (
  <>
    <path stroke="#0f0" d={bx(311, 205, 855, 604)} />
    <path stroke="#ff0" strokeWidth="2" d="M336.500 214.500H1155.500V797.500H336.500ZM972.500 797V747.500H1155" />
    <path
      stroke="#0f0"
      d={
        vl(1064, 749, 798) + vl(1090, 749, 772) + hl(1064, 1156, 756) + hl(1064, 1115, 764) + hl(973, 1156, 772) + vl(1115, 756, 772) + vl(1130, 756, 772) +
        hl(973, 1064, 780) + hl(973, 1064, 788) + vl(1003, 772, 798) + bx(989, 762, 59, 6) + bx(1070, 750, 14, 4) + bx(1072, 758, 10, 4) + bx(1070, 766, 14, 4) +
        bx(1121, 758, 3, 4) + bx(1121, 766, 3, 4) + bx(1137, 762, 12, 4) + bx(1083, 782, 52, 4) + bx(981, 774, 14, 4) + bx(981, 783, 14, 4) + bx(981, 792, 14, 4)
      }
    />
    <path stroke="#fff" d={hl(1115, 1130, 756)} />
    <g fill="#c4c4c4" stroke="none" fontSize="8">
      {NOTES.map(([x, y, t]) => <text key={y} x={x} y={y}>{t}</text>)}
    </g>
  </>
);

const Drawing = () => (
  <svg width="1094" height="803" viewBox="250.5 177.5 1094 803" fill="none" strokeLinecap="square" shapeRendering="crispEdges" fontFamily='"Liberation Sans", "Noto Sans CJK SC", sans-serif'>
    <Elevation />
    <Frame />
    <Joints />
    <Sections />
    <Materials />
    <TitleBlock />
  </svg>
);

/* ---------- Pieces ---------- */

const DRAW: [string, string, boolean][] = [["line", "直线", true], ["poly", "多段线", false], ["circle", "圆", true], ["arc", "圆弧", true], ["curve", "曲线", true]];
const DRAW_SMALL = ["rect", "v", "ellipse", "func", "dot", "parallel", "", "contour", "shaft", "arrow", "axis", "v", "hatch", "gear", "section"];
const EDIT_SMALL = ["move", "trim", "array", "open", "erase", "v", "copy", "extend", "mirror", "scale", "select", "v", "offset", "stretch", "rotate", "block", "fillEdit", "v"];

const Cells = ({ items }: { items: string[] }) => (
  <>
    {items.map((n, i) => n === "" ? <span key={i} /> : (
      <IconButton key={i} aria-label={n === "v" ? "更多" : n}>{n === "v" ? <Arrow /> : <Small n={n} />}</IconButton>
    ))}
  </>
);

const Tool = ({ icon, label, arrow = true, w }: { icon: string; label: string; arrow?: boolean; w?: number }) => (
  <BigButton $w={w}>
    <Icon s={32} c="#333a44">{Big[icon]}</Icon>
    <span>{label}</span>
    {arrow && <Arrow />}
  </BigButton>
);

const Item = ({ icon, label, arrow }: { icon: string; label: string; arrow?: boolean }) => (
  <ListButton><Small n={icon} /><span>{label}</span>{arrow && <Arrow />}</ListButton>
);

const GREY = "#a8a8a8";
const DARK = "#444";
const ROWS: { name: string; value?: React.ReactNode; tone?: string; latin?: boolean; pad?: number; gap?: number }[] = [
  { name: "当前特性" },
  { name: "层", value: "20", tone: DARK, latin: true },
  { name: "线型", value: <><Stroke $w={48} $c="#000" />ByLayer</>, tone: DARK, latin: true, pad: 5 },
  { name: "线型比例", value: "1.000", tone: DARK, latin: true },
  { name: "线宽", value: <><Stroke $w={48} $c="#ccc" />ByLayer</>, tone: "#222", latin: true, pad: 5 },
  { name: "颜色", value: <><Swatch $size={12} $edge="#000" />ByLayer</>, tone: "#000", latin: true, pad: 2, gap: 1 },
  { name: "文本风格", value: "STANDARD", tone: "#000", latin: true },
  { name: "标注风格", value: "Standard", tone: "#000", latin: true },
  { name: "图幅设置" },
  { name: "图纸幅面", value: "A1", tone: GREY, latin: true },
  { name: "加长系数", value: "0", tone: GREY, latin: true },
  { name: "宽度", value: "841.000", tone: GREY, latin: true },
  { name: "高度", value: "594.000", tone: GREY, latin: true },
  { name: "图纸比例", value: "1:1", tone: GREY, latin: true },
  { name: "图纸方向", value: "横放", tone: GREY },
];

const Slant = ({ fill = "none" }: { fill?: string }) => (
  <svg width="20" height="20" viewBox="0 0 20 20" aria-hidden="true">
    <path d="M0 20L16 2Q18 .5 20 .5V20z" fill={fill} />
    <path d="M0 20L16 2Q18 .5 20 .5" fill="none" stroke="#aaa" />
  </svg>
);

export default function CadWindow() {
  return (
    <App>
      <GlobalStyle />
      <TitleBar>
        <QuickAccess>
          <QuickButton $w={20} aria-label="CAXA">
            <Icon c="#49b4ff"><path d="M0 2l9 0 3 5-3 6-7 0-3-5z" strokeWidth="2" stroke="#1478d4" /><circle cx="5" cy="7" r="3" stroke="#8fd0ff" /><path d="M7 9l4 5" strokeWidth="2" /></Icon>
          </QuickButton>
          <QuickButton aria-label="新建"><Icon c="#888"><path d="M.5 2.500h11l4 3v8H.5z" fill="#fff" /><path d="M11.500 2.500v3h4" /></Icon></QuickButton>
          <QuickButton aria-label="打开"><Icon c="#777"><path d="M1.500 13V3.500h4l1 2h5V8" fill="#fff" /><path d="M1.500 13.500l3-6h11l-4 6z" fill="#d9d9d9" /></Icon></QuickButton>
          <QuickButton aria-label="保存"><Icon c="#333"><path d="M1.500 1.500h13v13h-13z" fill="#444" /><path d="M4 2h8v5H4z" fill="#fff" stroke="none" /><path d="M5 10h6v5H5z" fill="#ddd" stroke="none" /></Icon></QuickButton>
          <QuickButton aria-label="另存为"><Icon c="#666"><path d="M2.500.5h7l3 3v10h-10z" fill="#fff" /><path d="M2 10l3 2 3-2" stroke="#1f6fc0" /><path d="M8 9h7v6H8z" fill="#444" /><path d="M10 9h3v2h-3z" fill="#fff" stroke="none" /></Icon></QuickButton>
          <QuickButton aria-label="打印"><Icon c="#666"><path d="M4.500 1.500h8v5h-8z" fill="#fff" /><path d="M1.500 6.500h14v5h-14z" fill="#ccc" /><path d="M4 9h9v5H4z" fill="#46bfe8" stroke="none" /></Icon></QuickButton>
          <QuickButton aria-label="撤销"><Icon c="#fff"><path d="M3 6.500h7c5 0 5 7 0 7" strokeWidth="2" /><path d="M1 6.500L6 2v9z" fill="#fff" stroke="none" /></Icon></QuickButton>
          <QuickButton $w={9} aria-label="撤销列表"><Arrow c="#fff" /></QuickButton>
          <QuickButton $w={26} aria-label="重做"><Icon c="#5c86c2"><path d="M13 6.500H6c-5 0-5 7 0 7" strokeWidth="2" /><path d="M15 6.500L10 2v9z" fill="#5c86c2" stroke="none" /></Icon></QuickButton>
          <QuickButton $w={9} aria-label="重做列表"><Arrow c="#a9bedd" /></QuickButton>
          <QuickButton $w={20} aria-label="自定义"><Icon s={8} w={6} c="#dfe8f5"><path d="M0 1.500h6" /><path d="M0 4h6L3 7z" fill="#dfe8f5" stroke="none" /></Icon></QuickButton>
        </QuickAccess>
        <Title>CAXA CAD 电子图板 2020 - [刚架节点图（完）.dwg*]</Title>
      </TitleBar>

      <TabBar>
        <RibbonTab $menu>菜单</RibbonTab>
        <RibbonTab $active>常用</RibbonTab>
        {["插入", "标注", "图幅", "工具", "视图", "帮助"].map((t) => <RibbonTab key={t}>{t}</RibbonTab>)}
        <SearchLabel>
          <Icon s={14} w={12} c="#b4c8e6"><path d="M4 9C0 5 2 1.500 6 1.500S12 5 8 9v1.500H4zM4.500 12.500h3" /></Icon>
          <input aria-label="功能搜索" placeholder="功能搜索..." />
        </SearchLabel>
      </TabBar>

      <Ribbon>
        <Group $left={3} $right={6}>
          <GroupBody>
            {DRAW.map(([i, l, a]) => <Tool key={i} icon={i} label={l} arrow={a} />)}
            <IconGrid $cols="24px 10px 26px 26px 26px"><Cells items={DRAW_SMALL} /></IconGrid>
          </GroupBody>
          <GroupName>绘图</GroupName>
        </Group>
        <Group $left={4} $right={5}>
          <GroupBody><IconGrid $cols="26px 26px 26px 26px 26px 10px"><Cells items={EDIT_SMALL} /></IconGrid></GroupBody>
          <GroupName>修改</GroupName>
        </Group>
        <Group $left={6} $right={7}>
          <GroupBody>
            <Tool icon="dim" label="尺寸" />
            <Tool icon="symbol" label="符号" />
            <List>
              <Item icon="text" label="文字" arrow />
              <Item icon="table" label="表格" />
              <Item icon="coord" label="坐标" arrow />
            </List>
          </GroupBody>
          <GroupName>标注</GroupName>
        </Group>
        <Group $left={6} $right={5}>
          <GroupBody>
            <Tool icon="style" label="样式管理" w={56} />
            <ComboGrid>
              <SplitIcon aria-label="图层"><Small n="layers" /><Arrow /></SplitIcon>
              <Combo>
                <Small n="bulb" /><Small n="sun" /><Icon s={16} w={14}>{S.lock}</Icon><Small n="plot" />
                <Swatch $size={14} $edge="#000" />
                <select aria-label="当前图层"><option>20</option></select><Arrow c="#888" />
              </Combo>
              <IconButton aria-label="颜色"><Wheel /></IconButton>
              <Combo $pad={7}>
                <Swatch $size={12} $edge="#1f7fd6" />
                <select aria-label="当前颜色"><option>&nbsp;ByLayer</option></select><Arrow c="#888" />
              </Combo>
              <SplitIcon aria-label="线宽"><Small n="lines" /><Arrow /></SplitIcon>
              <Combo>
                <Stroke $w={60} $c="#000" />
                <select aria-label="当前线型"><option>ByLayer</option></select><Arrow c="#888" />
              </Combo>
              <IconButton aria-label="线型"><Small n="weights" /></IconButton>
              <Combo $pad={1}>
                <Stroke $w={71} $c="#f00" />
                <select aria-label="当前线宽"><option>ByLayer</option></select><Arrow c="#888" />
              </Combo>
            </ComboGrid>
          </GroupBody>
          <GroupName>特性</GroupName>
        </Group>
        <Group $left={6} $right={9}>
          <GroupBody>
            <Tool icon="paste" label="粘贴" />
            <List>
              <Item icon="cut" label="剪切" />
              <Item icon="dup" label="复制" arrow />
              <Item icon="match" label="特性匹配" />
            </List>
          </GroupBody>
          <GroupName>剪切板</GroupName>
        </Group>
      </Ribbon>

      <Workspace>
        <SideStrip>
          <SideTab>
            <Icon c="#222"><path d="M1 7c0-4 2-4 5-4M5 1l2 2-2 2M9 3h6M12 3v7M9 2v2M15 2v2M.5 11.500h14v3H.5z" /><path d="M3 13h9" stroke="#999" /></Icon>
            <span>图库</span>
          </SideTab>
        </SideStrip>
        <Panel>
          <PanelHead>
            <h2>特性</h2>
            <HeadButton aria-label="菜单"><Icon s={6} w={10}><path d="M0 0h10L5 5z" fill="#777" stroke="none" /></Icon></HeadButton>
            <HeadButton aria-label="固定"><Icon s={10} w={8} c="#777"><path d="M1.500.5h5v5h-5zM0 5.500h8M4 6v4M5.500 1v4" /></Icon></HeadButton>
            <HeadButton aria-label="关闭"><Icon s={8} c="#777"><path d="M.5.5l7 7M7.500.5l-7 7" strokeWidth="1.500" /></Icon></HeadButton>
          </PanelHead>
          <Selector>
            <ScopeCombo $pad={2}>
              <select aria-label="选择范围"><option>全局信息</option></select><Arrow c="#777" />
            </ScopeCombo>
            <ToolButton aria-label="清除">
              <Icon s={18} c="#c01414"><path d="M2 13l9-10" stroke="#7a5320" strokeWidth="4" /><path d="M2.500 12.500l8-9" stroke="#ffc64a" strokeWidth="2" /><path d="M10 11l5 5M15 11l-5 5" strokeWidth="2" /></Icon>
            </ToolButton>
            <ToolButton aria-label="快速选择">
              <Icon s={18} c="#164f8c"><path d="M2.500 1.500h12v11h-12z" fill="#4291d8" /><path d="M6 5v10l2-2 2 4 2-1-2-4h3z" fill="#fff" stroke="#222" strokeWidth=".8" /><path d="M14 10l-2 4h2l-1 4 5-5h-2l1-3z" fill="#ffb01e" stroke="#c77" strokeWidth=".5" /></Icon>
            </ToolButton>
          </Selector>
          <Sheet>
            <Props>
              <colgroup><col /><col /></colgroup>
              <thead><tr><th>特性名</th><th>特性值</th></tr></thead>
              <tbody>
                {ROWS.map((r, i) => r.tone ? (
                  <Row key={r.name} $tone={r.tone}>
                    <th scope="row">{r.name}</th>
                    <td><Value $latin={r.latin} $pad={r.pad} $gap={r.gap}>{r.value}</Value></td>
                  </Row>
                ) : (
                  <Row key={r.name} $tone={i ? "#000" : "#333"}>
                    <th colSpan={2}>
                      <SectionToggle><Icon s={6} c="none"><path d="M6 0v6H0z" fill="#999" /></Icon>{r.name}</SectionToggle>
                    </th>
                  </Row>
                ))}
              </tbody>
            </Props>
            <Blank />
            <Hint />
          </Sheet>
        </Panel>

        <Documents>
          <DocTabs>
            <DocTab><Slant /><DocTabBody>吊车梁及平台(完).dwg*</DocTabBody></DocTab>
            <DocTab $active>
              <Slant fill="#fff" />
              <DocTabBody $active>
                刚架节点图（完）.dwg*
                <button aria-label="关闭文档"><Icon s={8} c="#555"><path d="M.5.5l7 7M7.500.5l-7 7" /></Icon></button>
              </DocTabBody>
            </DocTab>
          </DocTabs>
          <Canvas><Drawing /></Canvas>
          <SheetTabs>
            <SheetNav>
              <NavButton aria-label="首页"><Icon s={8} c="#666"><path d="M1.500 1v6" /><path d="M7 1v6L3 4z" fill="#666" stroke="none" /></Icon></NavButton>
              <NavButton aria-label="上一页"><Icon s={8} c="none"><path d="M6 1v6L2 4z" fill="#666" /></Icon></NavButton>
              <NavButton aria-label="下一页"><Icon s={8} c="none"><path d="M2 1v6l4-3z" fill="#666" /></Icon></NavButton>
              <NavButton aria-label="末页"><Icon s={8} c="#666"><path d="M6.500 1v6" /><path d="M1 1v6l4-3z" fill="#666" stroke="none" /></Icon></NavButton>
            </SheetNav>
            <Icon w={8} c="#aaa"><path d="M0 0h8v16z" fill="#fff" stroke="none" /><path d="M0 0l8 15.500" /></Icon>
            <SheetTab $active>模型</SheetTab>
            <Icon w={8} c="#aaa"><path d="M0 16V0h8z" fill="#fff" stroke="none" /><path d="M0 15.500L8 0M4 8l4 7.500" /></Icon>
            <SheetTab>布局1</SheetTab>
            <Icon w={8} c="#aaa"><path d="M0 15.500L8 0" /></Icon>
          </SheetTabs>
        </Documents>
      </Workspace>

      <StatusBar>
        <Grip><Icon w={2} c="#aaa"><path d="M.5 0v16" strokeDasharray="2 2" /></Icon></Grip>
      </StatusBar>
    </App>
  );
}
